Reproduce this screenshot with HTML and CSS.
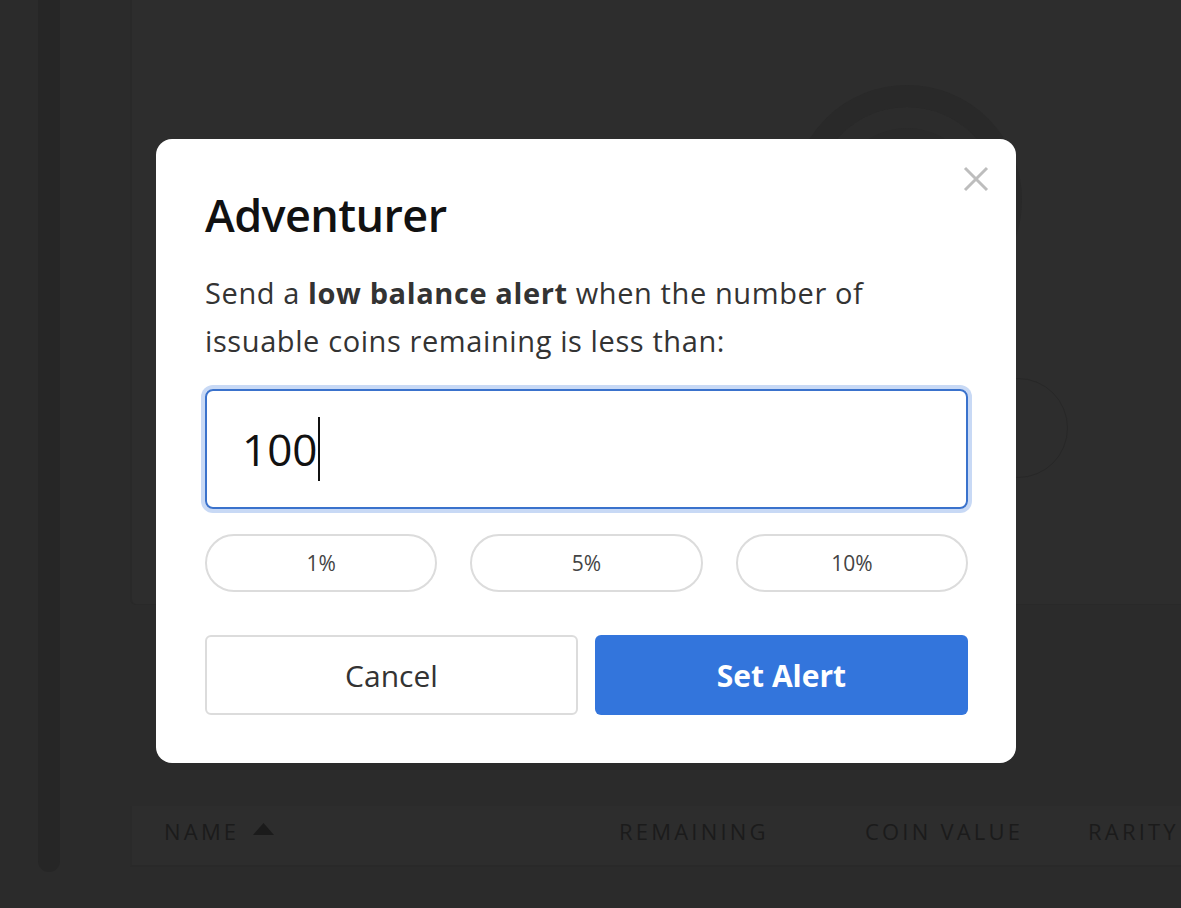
FILE: index.html
```html
<!DOCTYPE html>
<html lang="en">
<head>
  <meta charset="UTF-8" />
  <meta name="viewport" content="width=device-width, initial-scale=1.0"/>
  <title>Coins | Low Balance Alert</title>
  <link rel="stylesheet" href="styles.css">
</head>
<body>

  <!-- Page behind the dialog -->
  <div class="app">
    <div class="sidebar">
      <div class="rail"></div>
    </div>

    <div class="content">
      <div class="panel">
        <div class="ring"></div>
        <div class="dot"></div>
      </div>

      <div class="table">
        <div class="table-head">
          <div class="col col-name">
            NAME
            <svg class="sort" width="21" height="12" viewBox="0 0 21 12"><path d="M10.5 0 L21 12 L0 12 Z" fill="#1b1b1b"/></svg>
          </div>
          <div class="col col-remaining">REMAINING</div>
          <div class="col col-value">COIN VALUE</div>
          <div class="col col-rarity">RARITY</div>
        </div>
      </div>
    </div>
  </div>

  <!-- Alert Dialog -->
  <div class="overlay">
    <div class="modal">
      <button class="close" aria-label="Close">
        <svg width="26" height="26" viewBox="0 0 26 26">
          <path d="M2 2 L24 24 M24 2 L2 24" stroke="#bdbdbd" stroke-width="3" fill="none"/>
        </svg>
      </button>

      <h2>Adventurer</h2>
      <p>Send a <b>low balance alert</b> when the number of issuable coins remaining is less than:</p>

      <div class="field">
        <span class="value">100</span><span class="caret"></span>
      </div>

      <div class="presets">
        <button class="preset">1%</button>
        <button class="preset">5%</button>
        <button class="preset">10%</button>
      </div>

      <div class="actions">
        <button class="btn btn-cancel">Cancel</button>
        <button class="btn btn-primary">Set Alert</button>
      </div>
    </div>
  </div>

</body>
</html>
```

FILE: styles.css
```css
* {
  box-sizing: border-box;
}

body {
  margin: 0;
  height: 908px;
  overflow: hidden;
  font-family: 'Open Sans', 'Noto Sans', sans-serif;
  background-color: #2b2b2b;
}

/* Background page */
.app {
  display: flex;
  height: 100%;
}

.sidebar {
  width: 60px;
  padding-left: 38px;
}

.rail {
  width: 22px;
  height: 872px;
  background: #262626;
  border-radius: 0 0 11px 11px;
}

.content {
  flex: 1;
  padding-left: 70px;
  display: flex;
  flex-direction: column;
}

.panel {
  position: relative;
  height: 605px;
  background: #2d2d2d;
  border-left: 2px solid #292929;
  border-bottom: 1px solid #292929;
  border-bottom-left-radius: 6px;
}

.ring {
  position: absolute;
  left: 660px;
  top: 85px;
  width: 230px;
  height: 230px;
  border-radius: 50%;
  border: 22px solid #292929;
  box-shadow: inset 0 0 0 21px #2c2c2c, inset 0 0 0 60px #2a2a2a;
}

.dot {
  position: absolute;
  left: 836px;
  top: 378px;
  width: 100px;
  height: 100px;
  border-radius: 50%;
  border: 1px solid #272727;
}

.table {
  margin-top: 201px;
}

.table-head {
  display: flex;
  align-items: center;
  height: 61px;
  padding-bottom: 10px;
  border-bottom: 2px solid #292929;
  border-left: 2px solid #2a2a2a;
  background: #2d2d2d;
  font-size: 22px;
  letter-spacing: 3.2px;
  color: #1b1b1b;
}

.col-name {
  width: 487px;
  padding-left: 32px;
  display: flex;
  align-items: center;
}

.sort {
  margin-left: 14px;
  margin-bottom: 3px;
}

.col-remaining {
  width: 246px;
}

.col-value {
  width: 223px;
}

/* Dialog */
.overlay {
  position: fixed;
  top: 0;
  left: 0;
  right: 0;
  bottom: 0;
  display: flex;
  align-items: flex-start;
  padding: 139px 0 0 156px;
}

.modal {
  position: relative;
  width: 860px;
  height: 624px;
  background: #fff;
  border-radius: 16px;
  padding: 44px 48px 48px 49px;
}

.close {
  position: absolute;
  top: 27px;
  right: 27px;
  border: none;
  background: none;
  padding: 0;
  width: 26px;
  height: 26px;
  cursor: pointer;
}

.close svg {
  display: block;
}

.modal h2 {
  margin: 0;
  font-size: 45px;
  font-weight: 600;
  line-height: 64px;
  color: #111;
  letter-spacing: -0.6px;
}

.modal p {
  margin: 22px 0 24px;
  font-size: 29px;
  line-height: 48px;
  color: #333;
  letter-spacing: 0.6px;
}

.modal p b {
  font-weight: 700;
}

.field {
  display: flex;
  align-items: center;
  height: 120px;
  margin: 0 0 25px;
  padding-left: 35px;
  border: 2px solid #3a72cc;
  border-radius: 8px;
  box-shadow: 0 0 0 4px #c8d9f5;
  font-size: 44px;
  color: #111;
}

.caret {
  display: inline-block;
  width: 2px;
  height: 64px;
  background: #111;
  margin-left: 1px;
}

.presets {
  display: flex;
  gap: 33px;
  margin-bottom: 43px;
}

.preset {
  flex: 1;
  height: 58px;
  background: #fff;
  border: 2px solid #dcdcdc;
  border-radius: 29px;
  font-family: inherit;
  font-size: 21px;
  color: #444;
  cursor: pointer;
}

.actions {
  display: flex;
  gap: 17px;
}

.btn {
  height: 80px;
  border-radius: 6px;
  font-family: inherit;
  font-size: 30px;
  cursor: pointer;
}

.btn-cancel {
  width: 373px;
  background: #fff;
  border: 2px solid #dcdcdc;
  color: #333;
}

.btn-primary {
  flex: 1;
  background: #3375dc;
  border: none;
  color: #fff;
  font-weight: 700;
}
```
